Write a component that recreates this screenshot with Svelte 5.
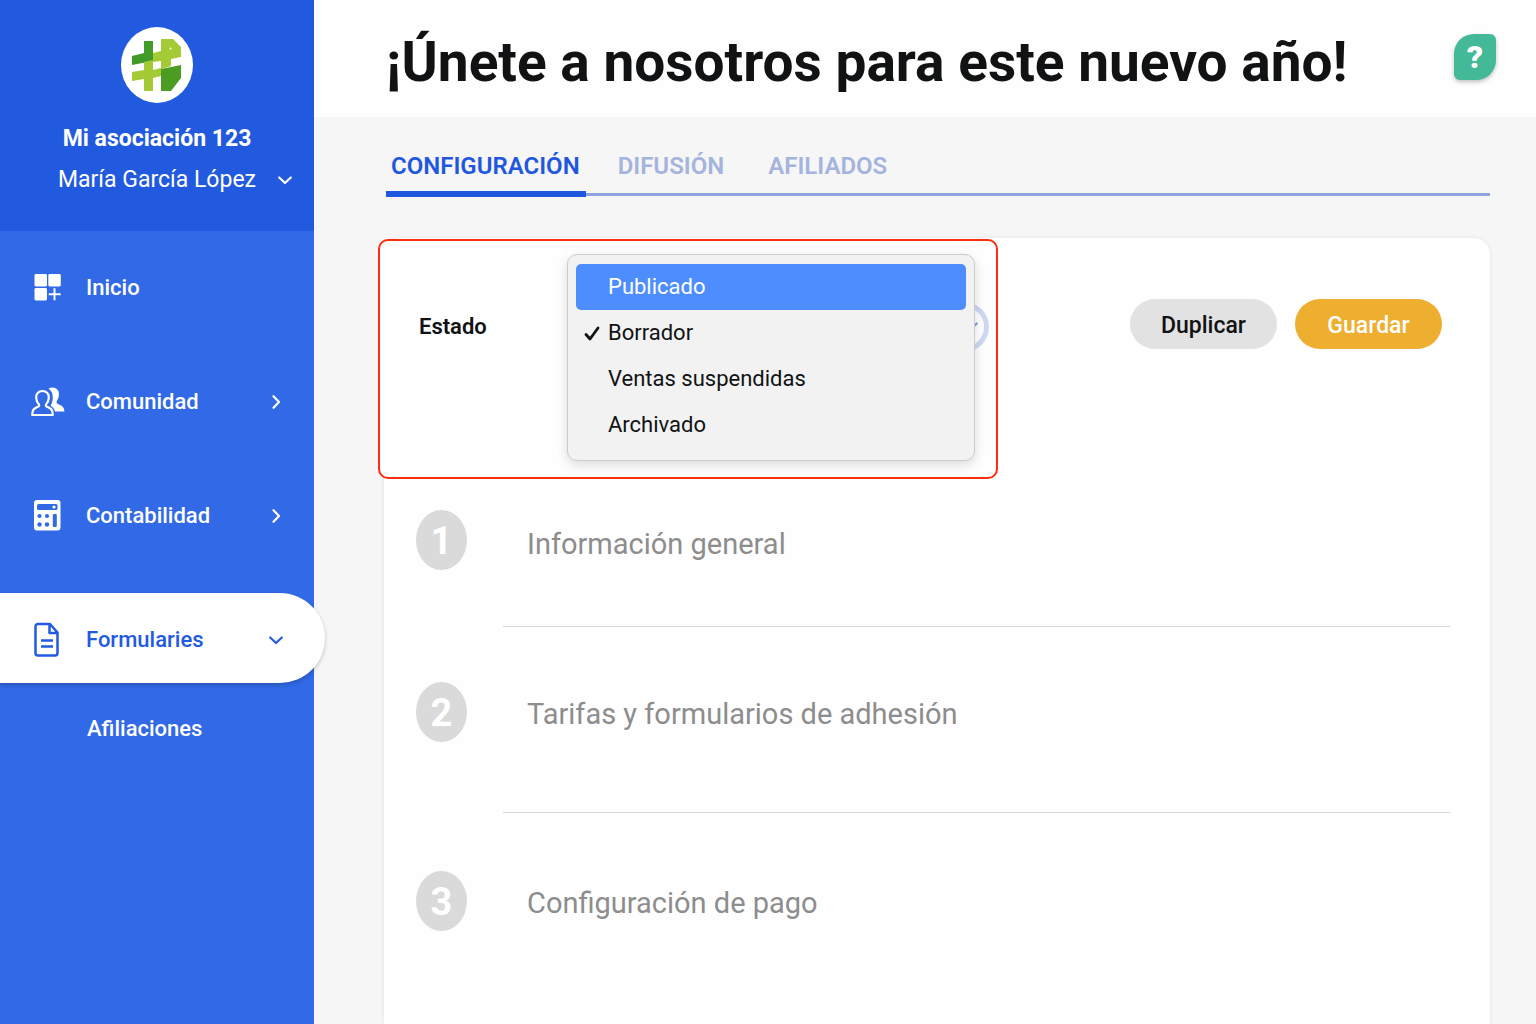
<script lang="ts">
	type NavItem = { label: string; icon: string; chevron?: 'right' | 'down'; active?: boolean };

	const navItems: NavItem[] = [
		{ label: 'Inicio', icon: 'home' },
		{ label: 'Comunidad', icon: 'people', chevron: 'right' },
		{ label: 'Contabilidad', icon: 'calculator', chevron: 'right' },
		{ label: 'Formularies', icon: 'form', chevron: 'down', active: true }
	];
	const tabs = ['CONFIGURACIÓN', 'DIFUSIÓN', 'AFILIADOS'];
	const states = ['Publicado', 'Borrador', 'Ventas suspendidas', 'Archivado'];
	const steps = ['Información general', 'Tarifas y formularios de adhesión', 'Configuración de pago'];

	let activeTab = $state(tabs[0]);
	let status = $state('Borrador');
	let highlighted = $state('Publicado');
	let menuOpen = $state(true);

	function choose(option: string) {
		status = option;
		menuOpen = false;
	}
</script>

{#snippet chevron(direction: string)}
	<svg class="chevron" class:down={direction === 'down'} viewBox="0 0 16 16" aria-hidden="true">
		<path d="M5.5 2.2 11 8l-5.5 5.8" />
	</svg>
{/snippet}

{#snippet navIcon(name: string)}
	<svg class="nav-icon" viewBox="0 0 36 36" aria-hidden="true">
		{#if name === 'home'}
			<g fill="currentColor">
				<rect x="4.5" y="4" width="12.5" height="12.5" rx="1.4" />
				<rect x="18.3" y="4" width="12.5" height="12.5" rx="1.4" />
				<rect x="4.5" y="18" width="12.5" height="12.5" rx="1.4" />
			</g>
			<path d="M24.5 18.2v12M18.7 24.3h12" fill="none" stroke="currentColor" stroke-width="2" />
		{:else if name === 'people'}
			<path
				d="M18.5 4.5c3.5-2 8.500-1 10 2.800 1 3.200.3 6.700-1.500 9.400-.8 1.500-.5 2.500.8 3.200 3.800 1.600 6.400 2.800 6.700 7.600h-9.500c-.5-3.200-2.500-4.500-4.500-5.500 3.200-5.200 3.500-13.700-2-17.500Z"
				fill="currentColor"
			/>
			<path
				d="M12.5 7c-4.200 0-6.600 3-6.300 6.800.2 2.700 1.200 4.900 2.500 6.300.9 1.300.5 2-.7 2.600C4.500 24.400 2.200 25 2.200 31h20.600c0-6-2.200-6.600-5.800-8.300-1.200-.6-1.600-1.300-.7-2.600 1.300-1.400 2.300-3.600 2.500-6.300.3-3.800-2.100-6.800-6.300-6.800Z"
				fill="none"
				stroke="currentColor"
				stroke-width="2.2"
				stroke-linejoin="round"
			/>
		{:else if name === 'calculator'}
			<path
				fill="currentColor"
				fill-rule="evenodd"
				d="M7 2h20.500a3 3 0 0 1 3 3v24.500a3 3 0 0 1-3 3H7a3 3 0 0 1-3-3V5a3 3 0 0 1 3-3ZM8.500 6a1.500 1.500 0 0 0-1.500 1.500v3A1.500 1.500 0 0 0 8.500 12h17.500a1.500 1.500 0 0 0 1.500-1.500v-3A1.500 1.500 0 0 0 26 6Z"
			/>
			<circle cx="24" cy="9" r="1.6" fill="currentColor" />
			<g class="keys">
				<circle cx="9.5" cy="18" r="2.1" />
				<circle cx="17" cy="18" r="2.1" />
				<circle cx="9.5" cy="26.5" r="2.2" />
				<circle cx="17" cy="26.5" r="2.2" />
				<rect x="22.8" y="16" width="4" height="13" rx="1" />
			</g>
		{:else}
			<path
				d="M8 2h12l7.500 8.500V31a2.500 2.500 0 0 1-2.500 2.500H8A2.500 2.500 0 0 1 5.500 31V4.500A2.500 2.500 0 0 1 8 2ZM19.500 3v8H27M11 18.500h12M11 24.500h12"
				fill="none"
				stroke="currentColor"
				stroke-width="2.5"
				stroke-linejoin="round"
			/>
		{/if}
	</svg>
{/snippet}

<div class="layout">
	<aside class="sidebar">
		<div class="account">
			<svg class="logo" viewBox="0 0 72 76" role="img" aria-label="Mi asociación 123">
				<ellipse cx="36" cy="38" rx="36" ry="38" fill="#fff" />
				<path d="M11 29l12-3V14h9v20l-21 4Z" fill="#439b27" />
				<path
					d="M23 35l9-2v-7l8-2V12h12l8 8v10l-10 2v7l-10 3v7l-8 2v13h-9V52l-12 2v-9l12-2Z"
					fill="#a4cb36"
				/>
				<path d="M32 35l8-1v7l-8 2Z" fill="#fff" />
				<path d="M40 42l20-4v13L50 64H40Z" fill="#4c9c22" />
				<circle cx="49.5" cy="21.5" r="1" fill="#fff" />
			</svg>
			<strong class="org">Mi asociación 123</strong>
			<button type="button" class="user">
				<span class="user-name">María García López</span>
				{@render chevron('down')}
			</button>
		</div>

		<nav>
			{#each navItems as item}
				<a href="#{item.label.toLowerCase()}" class="nav-item" class:active={item.active}>
					{@render navIcon(item.icon)}
					<span class="nav-label">{item.label}</span>
					{#if item.chevron}
						{@render chevron(item.chevron)}
					{/if}
				</a>
			{/each}
			<a href="#afiliaciones" class="sub-item">Afiliaciones</a>
		</nav>
	</aside>

	<div class="main">
		<header class="topbar">
			<h1>¡Únete a nosotros para este nuevo año!</h1>
			<button type="button" class="help" aria-label="Ayuda">?</button>
		</header>

		<main class="content">
			<div class="tabs" role="tablist">
				{#each tabs as tab}
					<button
						type="button"
						role="tab"
						class="tab"
						class:selected={tab === activeTab}
						aria-selected={tab === activeTab}
						onclick={() => (activeTab = tab)}
					>
						{tab}
					</button>
				{/each}
			</div>

			<section class="card">
				<div class="toolbar">
					<div class="status-box">
						<label for="status">Estado</label>
						<div class="status-field">
							<select id="status" bind:value={status}>
								{#each states as option}
									<option>{option}</option>
								{/each}
							</select>
							<span class="select-arrow">{@render chevron('down')}</span>
							{#if menuOpen}
								<div class="menu" role="listbox" aria-label="Estado">
									{#each states as option}
										<button
											type="button"
											role="option"
											class="option"
											class:highlighted={option === highlighted}
											aria-selected={option === status}
											onmouseenter={() => (highlighted = option)}
											onclick={() => choose(option)}
										>
											<svg class="check" viewBox="0 0 16 16" aria-hidden="true">
												{#if option === status}
													<path d="M2 9.500l4 4.500 8-11" />
												{/if}
											</svg>
											{option}
										</button>
									{/each}
								</div>
							{/if}
						</div>
					</div>
					<div class="actions">
						<button type="button" class="btn">Duplicar</button>
						<button type="button" class="btn primary">Guardar</button>
					</div>
				</div>

				<ol class="steps">
					{#each steps as step, i}
						<li class="step">
							<span class="step-number">{i + 1}</span>
							<h2>{step}</h2>
						</li>
					{/each}
				</ol>
			</section>
		</main>
	</div>
</div>

<style>
	:global(body) {
		background: #f6f6f6;
	}

	.layout {
		display: flex;
		min-height: 100vh;
		font-family: Roboto, 'Liberation Sans', sans-serif;
		font-size: 22px;
		line-height: 32px;
		color: #111214;
	}

	button {
		font: inherit;
		color: inherit;
		border: none;
		background: none;
		padding: 0;
		cursor: pointer;
	}

	.chevron {
		width: 16px;
		height: 16px;
		flex: none;
		fill: none;
		stroke: currentColor;
		stroke-width: 2.2;
		stroke-linecap: round;
		stroke-linejoin: round;
	}

	.chevron.down {
		transform: rotate(90deg);
	}

	.sidebar {
		position: relative;
		z-index: 1;
		flex: none;
		width: 314px;
		background: #3169e6;
		color: #fff;
	}

	.account {
		display: flex;
		flex-direction: column;
		align-items: center;
		box-sizing: border-box;
		height: 231px;
		padding-top: 27px;
		background: #225adf;
		font-size: 23px;
	}

	.logo {
		width: 72px;
		height: 76px;
	}

	.org {
		margin-top: 20px;
		font-weight: 700;
	}

	.user {
		display: grid;
		grid-template-columns: 1fr auto 1fr;
		align-items: center;
		column-gap: 21px;
		width: 100%;
		margin-top: 9px;
	}

	.user-name {
		grid-column: 2;
		white-space: nowrap;
	}

	.nav-item {
		display: flex;
		align-items: center;
		box-sizing: border-box;
		height: 114px;
		padding: 0 30px;
		color: inherit;
		font-weight: 500;
		text-decoration: none;
	}

	.nav-item.active {
		height: 90px;
		margin: 20px -11px 0 0;
		padding: 4px 41px 0 30px;
		border-radius: 0 45px 45px 0;
		background: #fff;
		color: #225ae2;
		box-shadow: 0 2px 4px rgba(0, 0, 0, 0.2);
	}

	.nav-icon {
		width: 36px;
		height: 36px;
	}

	.keys {
		fill: #3169e6;
	}

	.nav-label {
		flex: 1;
		margin-left: 20px;
	}

	.sub-item {
		display: block;
		padding: 30px 0 28px 87px;
		color: inherit;
		font-weight: 500;
		text-decoration: none;
	}

	.main {
		display: flex;
		flex-direction: column;
		flex: 1;
		min-width: 0;
	}

	.topbar {
		display: flex;
		align-items: center;
		justify-content: space-between;
		box-sizing: border-box;
		height: 117px;
		padding: 0 40px 4px 72px;
		background: #fefefe;
	}

	h1 {
		margin: 10px 0 0;
		font-size: 55px;
		line-height: 72px;
		font-weight: 700;
		white-space: nowrap;
	}

	.help {
		width: 42px;
		height: 46px;
		border-radius: 20px 6px 20px 6px;
		background: #43b997;
		color: #fff;
		font-size: 32px;
		font-weight: 900;
		box-shadow: 0 2px 4px rgba(0, 0, 0, 0.25);
	}

	.content {
		display: flex;
		flex-direction: column;
		flex: 1;
		padding: 24px 46px 0 70px;
	}

	.tabs {
		display: flex;
		margin-left: 2px;
		height: 56px;
		background: linear-gradient(#8ea3e0, #8ea3e0) 0 52px / 100% 3px no-repeat;
	}

	.tab {
		padding: 0 22px;
		border-bottom: 6px solid transparent;
		color: #a5b4de;
		font-size: 24px;
		font-weight: 600;
	}

	.tab.selected {
		padding: 0 6px 0 5px;
		margin-right: 10px;
		border-color: #1f58df;
		color: #1f58df;
	}

	.card {
		flex: 1;
		margin-top: 41px;
		border-radius: 16px 16px 0 0;
		background: #fefefe;
		box-shadow: 0 0 4px rgba(0, 0, 0, 0.08);
	}

	.toolbar {
		display: flex;
		justify-content: space-between;
		padding-right: 48px;
	}

	.status-box {
		display: flex;
		box-sizing: border-box;
		width: 620px;
		height: 240px;
		margin: 1px 0 0 -6px;
		padding: 61px 7px 0 39px;
		border: 2px solid #fb2e12;
		border-radius: 10px;
		background: #fefefe;
	}

	.status-box label {
		flex: 1;
		line-height: 50px;
		font-weight: 600;
	}

	.status-field {
		position: relative;
		width: 422px;
		height: 50px;
	}

	.status-field select {
		appearance: none;
		width: 100%;
		height: 50px;
		padding: 0 40px;
		border: 5px solid #cdd8f3;
		border-radius: 25px;
		background: #fff;
		font: inherit;
	}

	.select-arrow {
		position: absolute;
		top: 9px;
		right: 10px;
		color: #7f9fe6;
	}

	.menu {
		position: absolute;
		top: -48px;
		left: 0;
		right: 14px;
		box-sizing: border-box;
		height: 207px;
		padding: 9px 8px;
		border: 1px solid #cccccc;
		border-radius: 10px;
		background: #f2f2f2;
		box-shadow: 0 4px 12px rgba(0, 0, 0, 0.14);
	}

	.option {
		display: flex;
		align-items: center;
		gap: 8px;
		width: 100%;
		height: 46px;
		padding-left: 8px;
		border-radius: 5px;
	}

	.option.highlighted {
		background: #4d8dfe;
		color: #fff;
	}

	.check {
		width: 16px;
		height: 16px;
		fill: none;
		stroke: currentColor;
		stroke-width: 2.8;
		stroke-linecap: round;
		stroke-linejoin: round;
	}

	.actions {
		display: flex;
		gap: 18px;
		padding-top: 61px;
	}

	.btn {
		width: 147px;
		height: 50px;
		padding-top: 4px;
		border-radius: 25px;
		background: #e2e2e2;
		font-size: 23px;
		font-weight: 500;
	}

	.btn.primary {
		background: #eeae2f;
		color: #fff;
	}

	.steps {
		margin: 0;
		padding: 0 40px 0 32px;
		list-style: none;
	}

	.step {
		display: flex;
		gap: 36px;
	}

	.step-number {
		width: 51px;
		height: 60px;
		margin-top: 55px;
		border-radius: 50%;
		background: #dadada;
		color: #fff;
		font-size: 38px;
		font-weight: 700;
		line-height: 62px;
		text-align: center;
	}

	.step h2 {
		flex: 1;
		box-sizing: border-box;
		height: 186px;
		margin: 0;
		padding: 57px 0 0 24px;
		border-bottom: 1px solid #d6d6d6;
		color: #8d8d8d;
		font-size: 29px;
		line-height: 60px;
		font-weight: 400;
	}

	.step:first-child .step-number {
		margin-top: 31px;
	}

	.step:first-child h2 {
		height: 148px;
		padding-top: 35px;
	}

	.step:last-child {
		padding-top: 3px;
	}

	.step:last-child h2 {
		border-bottom: none;
	}
</style>
